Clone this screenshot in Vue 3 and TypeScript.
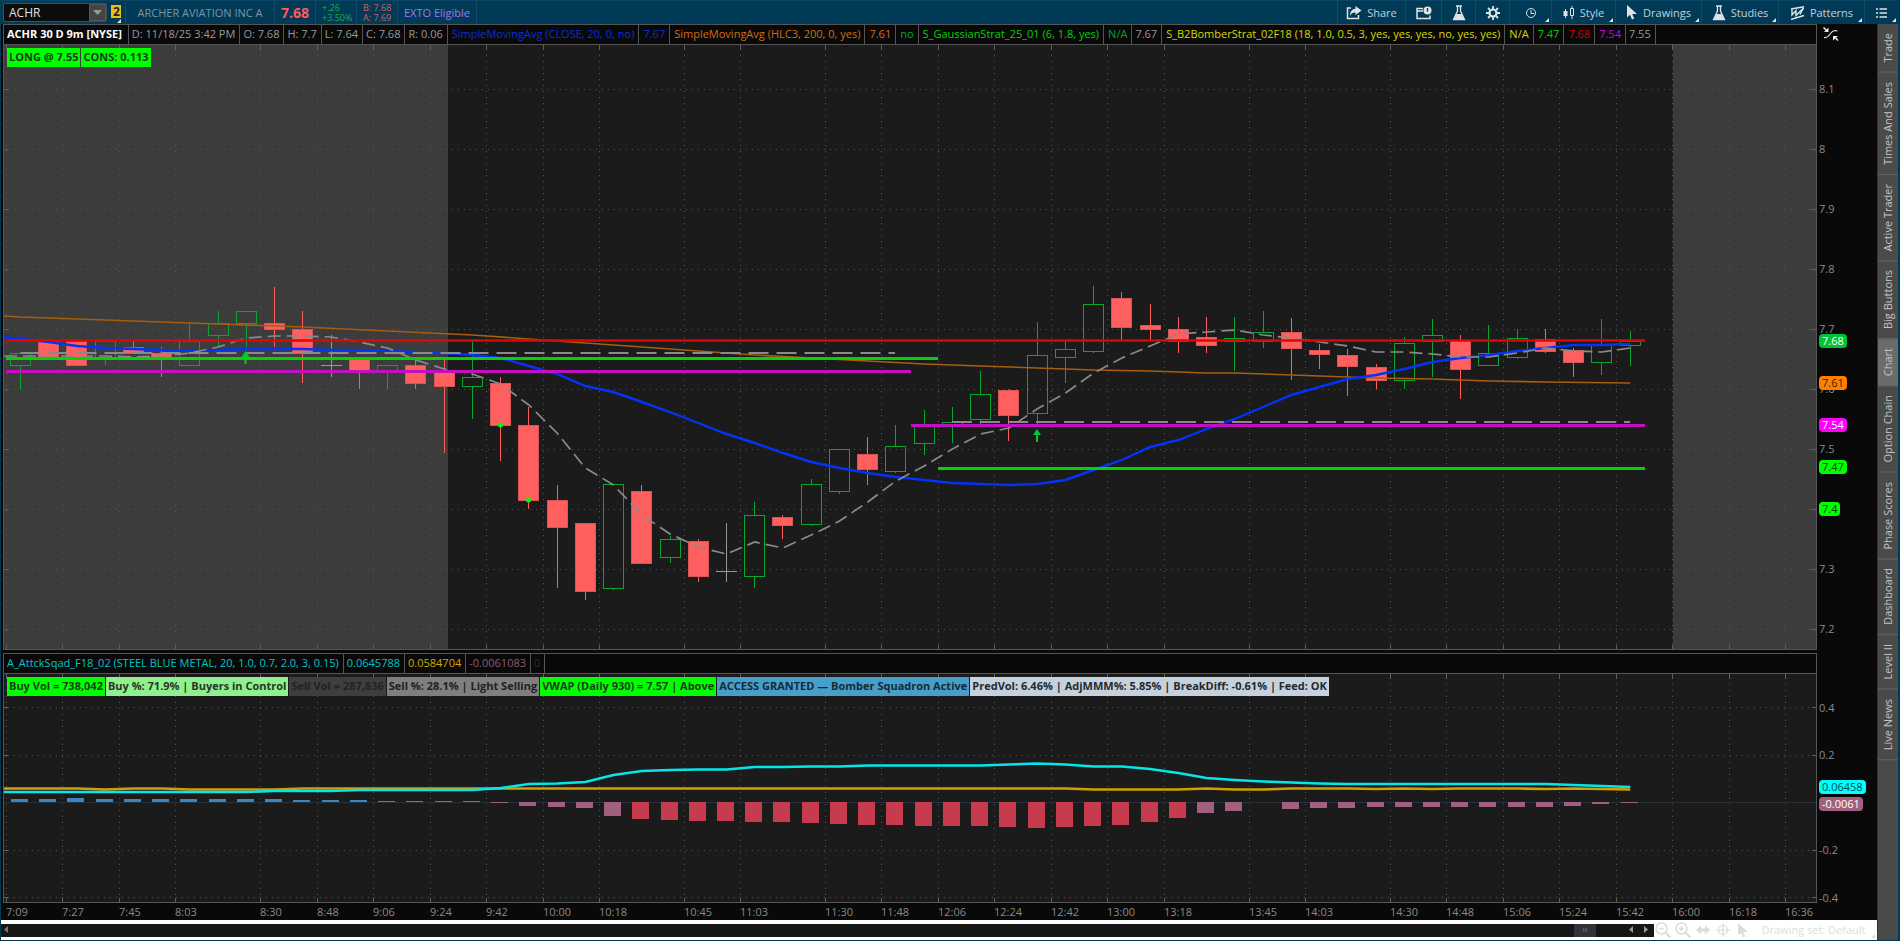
<script setup lang="ts">
type Pt = [number, number]
type Candle = [open: number, close: number, high: number, low: number]

const STEP = 28.24
const view = { x: 3, y: 45, w: 1814, h: 605 }
const lower = { x: 3, y: 674, w: 1814, h: 229 }

const slotX = (i: number) => 6.5 + STEP * i
const midX = (i: number) => 20.5 + STEP * i
const priceY = (p: number) => 329 + (7.7 - p) * 600
const studyY = (v: number) => 802.5 - v * 237.5

const quote = [
  { text: 'D: 11/18/25 3:42 PM', tone: 'grey' },
  { text: 'O: 7.68', tone: 'grey' },
  { text: 'H: 7.7', tone: 'grey' },
  { text: 'L: 7.64', tone: 'grey' },
  { text: 'C: 7.68', tone: 'grey' },
  { text: 'R: 0.06', tone: 'grey' },
  { text: 'SimpleMovingAvg (CLOSE, 20, 0, no)', tone: 'blue' },
  { text: '7.67', tone: 'blue' },
  { text: 'SimpleMovingAvg (HLC3, 200, 0, yes)', tone: 'orange' },
  { text: '7.61', tone: 'orange' },
  { text: 'no', tone: 'green' },
  { text: 'S_GaussianStrat_25_01 (6, 1.8, yes)', tone: 'lime' },
  { text: 'N/A', tone: 'green' },
  { text: '7.67', tone: 'grey' },
  { text: 'S_B2BomberStrat_02F18 (18, 1.0, 0.5, 3, yes, yes, yes, no, yes, yes)', tone: 'yellow' },
  { text: 'N/A', tone: 'yellow' },
  { text: '7.47', tone: 'lime' },
  { text: '7.68', tone: 'red' },
  { text: '7.54', tone: 'magenta' },
  { text: '7.55', tone: 'grey' },
]

const studyHead = [
  { text: 'A_AttckSqad_F18_02 (STEEL BLUE METAL, 20, 1.0, 0.7, 2.0, 3, 0.15)', tone: 'cyan' },
  { text: '0.0645788', tone: 'cyan' },
  { text: '0.0584704', tone: 'gold' },
  { text: '-0.0061083', tone: 'mauve' },
  { text: '0', tone: 'dim' },
]

const studyLabels = [
  { text: 'Buy Vol = 738,042', kind: 'lime' },
  { text: 'Buy %: 71.9% | Buyers in Control', kind: 'pale' },
  { text: 'Sell Vol = 287,836', kind: 'dark' },
  { text: 'Sell %: 28.1% | Light Selling', kind: 'mid' },
  { text: 'VWAP (Daily 930) = 7.57 | Above', kind: 'lime' },
  { text: 'ACCESS GRANTED — Bomber Squadron Active', kind: 'steel' },
  { text: 'PredVol: 6.46% | AdjMMM%: 5.85% | BreakDiff: -0.61% | Feed: OK', kind: 'silver' },
]

const times = [
  '7:09', '7:27', '7:45', '8:03', '8:30', '8:48', '9:06', '9:24', '9:42', '10:00',
  '10:18', '10:45', '11:03', '11:30', '11:48', '12:06', '12:24', '12:42', '13:00', '13:18',
  '13:45', '14:03', '14:30', '14:48', '15:06', '15:24', '15:42', '16:00', '16:18', '16:36',
].map((label) => {
  const [h, m] = label.split(':').map(Number)
  const x = Math.floor(slotX((h * 60 + m - 429) / 9))
  return { label, x: x + 0.5, left: ((x - view.x) / view.w) * 100 + '%' }
})

const priceTop = (p: number) => ((priceY(p) - view.y) / view.h) * 100 + '%'
const studyTop = (v: number) => ((studyY(v) - lower.y) / lower.h) * 100 + '%'
const prices = [8.1, 8, 7.9, 7.8, 7.7, 7.6, 7.5, 7.4, 7.3, 7.2]
const levels = [0.4, 0.2, -0.2, -0.4]
const priceTags = [
  { p: 7.68, text: '7.68', kind: 'current' },
  { p: 7.61, text: '7.61', kind: 'orange' },
  { p: 7.54, text: '7.54', kind: 'magenta' },
  { p: 7.47, text: '7.47', kind: 'lime' },
  { p: 7.4, text: '7.4', kind: 'lime' },
]

const candles: Candle[] = [
  [7.64, 7.66, 7.66, 7.6], [7.68, 7.65, 7.68, 7.65], [7.68, 7.64, 7.68, 7.64], [7.65, 7.68, 7.68, 7.64],
  [7.67, 7.66, 7.68, 7.66], [7.66, 7.65, 7.67, 7.62], [7.64, 7.68, 7.71, 7.64], [7.69, 7.71, 7.73, 7.67],
  [7.71, 7.73, 7.73, 7.67], [7.71, 7.7, 7.77, 7.67], [7.7, 7.66, 7.73, 7.61], [7.64, 7.64, 7.69, 7.62],
  [7.65, 7.63, 7.65, 7.6], [7.63, 7.64, 7.64, 7.6], [7.64, 7.61, 7.65, 7.6], [7.63, 7.605, 7.65, 7.494],
  [7.605, 7.62, 7.68, 7.55], [7.61, 7.54, 7.62, 7.48], [7.54, 7.415, 7.57, 7.4], [7.415, 7.37, 7.44, 7.268],
  [7.376, 7.263, 7.376, 7.248], [7.269, 7.441, 7.441, 7.265], [7.43, 7.31, 7.44, 7.31], [7.32, 7.35, 7.355, 7.31],
  [7.346, 7.288, 7.35, 7.278], [7.296, 7.296, 7.376, 7.278], [7.289, 7.39, 7.411, 7.268], [7.386, 7.374, 7.39, 7.35],
  [7.375, 7.441, 7.45, 7.372], [7.43, 7.5, 7.5, 7.425], [7.491, 7.467, 7.52, 7.44], [7.463, 7.505, 7.54, 7.46],
  [7.51, 7.54, 7.565, 7.49], [7.54, 7.545, 7.57, 7.51], [7.55, 7.592, 7.63, 7.542], [7.598, 7.557, 7.6, 7.514],
  [7.56, 7.656, 7.711, 7.542], [7.654, 7.667, 7.68, 7.61], [7.663, 7.742, 7.772, 7.66], [7.752, 7.704, 7.762, 7.68],
  [7.706, 7.7, 7.742, 7.68], [7.7, 7.68, 7.72, 7.66], [7.686, 7.674, 7.72, 7.66], [7.68, 7.685, 7.72, 7.63],
  [7.68, 7.695, 7.73, 7.669], [7.695, 7.669, 7.719, 7.615], [7.665, 7.659, 7.675, 7.634], [7.656, 7.639, 7.666, 7.589],
  [7.636, 7.615, 7.641, 7.6], [7.615, 7.676, 7.686, 7.6], [7.68, 7.69, 7.716, 7.62], [7.681, 7.634, 7.69, 7.584],
  [7.64, 7.66, 7.706, 7.638], [7.654, 7.685, 7.7, 7.65], [7.683, 7.664, 7.7, 7.66], [7.665, 7.645, 7.668, 7.62],
  [7.645, 7.674, 7.717, 7.624], [7.674, 7.68, 7.697, 7.639],
]

const bars = candles.map(([open, close, high, low], i) => {
  const x = Math.floor(midX(i)) + 0.5
  const top = Math.round(priceY(Math.max(open, close)))
  const bottom = Math.round(priceY(Math.min(open, close)))
  const kind = open === close ? 'flat' : close > open ? 'rise' : 'fall'
  return { x, top, bottom, kind, high: Math.round(priceY(high)), low: Math.round(priceY(low)) }
})

const path = (pts: Pt[]) => 'M' + pts.map(([x, y]) => x.toFixed(1) + ' ' + y).join('L')
const series = (start: number, ys: number[]) => path([[4, start], ...ys.map((y, i): Pt => [midX(i), y])])

const smaFast = series(337, [
  339, 342, 346, 348, 349, 350, 351, 350, 349, 349, 349, 350, 350, 351, 352, 353, 355, 358, 366, 374,
  386, 392, 402, 412, 423, 434, 443, 453, 462, 468, 473, 477, 480, 483, 484, 485, 484, 480, 470, 460,
  447, 440, 429, 419, 407, 395, 387, 379, 375, 369, 362, 358, 355, 351, 348, 345, 345, 344,
])
const gaussian = series(356, [
  356, 356, 356, 356, 357, 356, 353, 347, 338, 336, 336, 337, 342, 348, 360, 369, 374, 384, 405, 433,
  468, 485, 515, 534, 547, 554, 542, 548, 535, 521, 502, 481, 466, 449, 434, 428, 409, 393, 373, 358,
  346, 334, 332, 330, 335, 338, 342, 346, 352, 352, 354, 357, 357, 353, 348, 351, 352, 348,
])
const slowKnots: Pt[] = [
  [0, 317], [4, 321], [7, 324], [10, 327], [13, 331], [16, 335], [18, 339], [20, 343], [22, 347], [24, 351],
  [26, 355], [28, 358], [30, 361], [32, 364], [34, 366], [36, 368], [38, 370], [40, 371], [42, 373],
  [43, 373], [45, 375], [48, 378], [50, 379], [52, 381], [54, 382], [57, 383],
]
const smaSlow = path([[4, 316], ...slowKnots.map(([i, y]): Pt => [midX(i), y])])

const cyanLine = series(792, [
  792, 792, 792, 792, 792, 792, 792, 792, 792, 791, 791, 791, 790, 790, 790, 790, 790, 788, 784, 783.5,
  782, 775, 771, 770, 769.5, 769.5, 767, 767, 766.5, 766.5, 765.5, 765.5, 765.5, 765.5, 765.5, 764.5, 763.5, 764.5, 766.5, 766.5,
  769, 773, 778, 780, 781.5, 782.5, 783.5, 784, 784, 784, 784, 784, 784, 784, 784, 785, 786, 787,
])
const goldLine = series(788.5, [
  788.5, 788.5, 788.5, 789.5, 788.5, 788.5, 789.5, 789.5, 789.5, 789.5, ...Array(28).fill(788.5),
  789.5, 789.5, 789.5, 789.5, 788.5, 789.5, 789.5, 788.5, 788.5, 788.5, 789, 788.5, 789, 788.5, 788.5, 788.5, 789, 788.5, 789, 789.5,
])

const histogram = [
  3, 3, 4, 3, 3, 3, 3, 3, 3, 3, 2, 2, 2, 1, 1, 1, 1, -1, -4, -5, -6, -14, -17, -18, -19, -19, -20, -20, -21, -22,
  -23, -23, -24, -24, -24, -25, -26, -25, -24, -23, -20, -16, -11, -9, 0, -7, -6, -6, -5, -5, -5, -5, -5, -5, -5, -4, -2, -1,
].map((v, i) => ({
  x: Math.floor(midX(i)) - 9,
  y: v > 0 ? 802 - v : 802,
  h: Math.abs(v),
  kind: v > 0 ? 'gain' : v > -15 ? 'soft' : 'hard',
}))

const arrows = [{ x: 245.5, y: 351 }, { x: 1037, y: 429 }]
const tabs = ['Trade', 'Times And Sales', 'Active Trader', 'Big Buttons', 'Chart', 'Option Chain', 'Phase Scores', 'Dashboard', 'Level II', 'Live News']
</script>

<template>
  <div class="app">
    <header class="toolbar">
      <div class="symbol">
        <input id="symbol" value="ACHR" aria-label="Symbol" />
        <button aria-label="Symbol list"><svg width="10" height="6"><path d="M0 0h9L4.500 5z" fill="#999" /></svg></button>
      </div>
      <button class="link-no" aria-label="Link color 2">2<i class="corner"></i></button>
      <span class="name">ARCHER AVIATION INC A</span>
      <strong class="last">7.68</strong>
      <span class="pair up"><span>+.26</span><span>+3.50%</span></span>
      <span class="pair dn"><span>B: 7.68</span><span>A: 7.69</span></span>
      <span class="exto">EXTO Eligible</span>
      <nav class="tools">
        <button>
          <svg width="16" height="14" viewBox="0 0 16 14"><path d="M5 2H1.500v10.500h11V9" fill="none" stroke="#dde3e7" stroke-width="1.500" /><path d="M9.500 0l6 4.500-6 4.500V6.500C6.500 6.500 5 7.500 4 10c0-4 1.500-7 5.500-7.300z" fill="#dde3e7" /></svg>
          Share
        </button>
        <button aria-label="Events">
          <svg width="16" height="14" viewBox="0 0 16 14"><path d="M7 2.500H1v10h13V9.500M1 5h6" fill="none" stroke="#dde3e7" stroke-width="1.500" /><circle cx="11.500" cy="4.500" r="4" fill="#dde3e7" /><path d="M11.500 2v3.500" fill="none" stroke="#003a57" stroke-width="1.300" /></svg>
        </button>
        <button aria-label="Lab">
          <svg width="14" height="16" viewBox="0 0 14 16"><path d="M4 1h6M5.500 1v5L1.500 14.500h11L8.500 6V1" fill="none" stroke="#dde3e7" stroke-width="1.300" /><path d="M4.500 9h5l2.500 5H2z" fill="#dde3e7" /></svg>
        </button>
        <button aria-label="Settings">
          <svg width="16" height="16" viewBox="0 0 16 16"><circle cx="8" cy="8" r="3.500" fill="none" stroke="#dde3e7" stroke-width="2.200" /><path d="M8 1v3M8 12v3M1 8h3M12 8h3M3 3l2 2M11 11l2 2M13 3l-2 2M5 11l-2 2" stroke="#dde3e7" stroke-width="1.800" /></svg>
        </button>
        <button aria-label="Time frame">
          <svg width="12" height="12" viewBox="0 0 12 12"><circle cx="6" cy="6" r="4.500" fill="none" stroke="#dde3e7" /><path d="M6 3v3.500h3" fill="none" stroke="#dde3e7" /></svg>
          <i class="corner"></i>
        </button>
        <button>
          <svg width="12" height="14" viewBox="0 0 12 14"><path d="M2.500 3v9M9 0v13" stroke="#dde3e7" /><path d="M.500 5h4v5h-4z" fill="#dde3e7" /><path d="M7.500 2.500h3v7h-3z" fill="#003a57" stroke="#dde3e7" /></svg>
          Style<i class="corner"></i>
        </button>
        <button>
          <svg width="12" height="15" viewBox="0 0 12 15"><path d="M1 0v12.500l3-2.700 2 4.700 2.200-1-2-4.500H11z" fill="#dde3e7" /></svg>
          Drawings<i class="corner"></i>
        </button>
        <button>
          <svg width="14" height="16" viewBox="0 0 14 16"><path d="M4 1h6M5.500 1v5L1.500 14.500h11L8.500 6V1" fill="none" stroke="#dde3e7" stroke-width="1.300" /><path d="M4.500 9h5l2.500 5H2z" fill="#dde3e7" /></svg>
          Studies<i class="corner"></i>
        </button>
        <button>
          <svg width="15" height="14" viewBox="0 0 15 14"><path d="M1 3L14 .800M1 13.500l13-4M2 3v6l4-4.500v5L13.500 2 10 8.500" fill="none" stroke="#dde3e7" stroke-width="1.400" /></svg>
          Patterns<i class="corner"></i>
        </button>
        <button aria-label="Menu">
          <svg width="11" height="12" viewBox="0 0 11 12"><path d="M0 2h2M0 6h2M0 10h2M3.500 2H11M3.500 6H11M3.500 10H11" stroke="#dde3e7" stroke-width="1.500" /></svg>
          <i class="corner"></i>
        </button>
      </nav>
    </header>

    <div class="body">
      <main class="work">
        <section class="charts">
          <div class="head quote">
            <strong>ACHR 30 D 9m [NYSE]</strong>
            <span v-for="(c, i) in quote" :key="i" :class="c.tone">{{ c.text }}</span>
          </div>
          <div class="axis-top">
            <svg width="16" height="16" viewBox="0 0 16 16"><path d="M1 11.500C5 12.500 5.500 10 7.500 7.500S10.500 4 14.500 5" fill="none" stroke="#ddd" stroke-width="1.200" /><path d="M5.500 1.500V6H1zM10 10h5l-5 4.500z" fill="#eee" /><path d="M.500 1.500l3 3M12.500 12l2.500 2.500" stroke="#eee" stroke-width="1.500" /></svg>
          </div>

          <div class="plot">
            <svg class="canvas" :viewBox="`${view.x} ${view.y} ${view.w} ${view.h}`" preserveAspectRatio="none">
              <rect x="3" y="45" width="445" height="605" fill="#3c3c3c" />
              <rect x="1673" y="45" width="144" height="605" fill="#3c3c3c" />
              <g class="grid">
                <path v-for="p in prices" :key="p" :d="`M8 ${priceY(p) + 0.5}H1812`" />
                <path v-for="t in times" :key="t.label" :d="`M${t.x} 55V645`" />
              </g>
              <g class="ticks">
                <path v-for="p in prices" :key="p" :d="`M4 ${priceY(p) + 0.5}h5M1811 ${priceY(p) + 0.5}h6`" />
                <path v-for="t in times" :key="t.label" :d="`M${t.x} 45v5M${t.x} 645v5`" />
              </g>
              <g v-for="(b, i) in bars" :key="i" :class="b.kind">
                <path :d="`M${b.x} ${b.high}V${b.kind === 'flat' ? b.low : b.top}M${b.x} ${b.bottom}V${b.low}`" />
                <path v-if="b.kind === 'flat'" :d="`M${b.x - 10.5} ${b.top + 0.5}h21`" />
                <rect v-else :x="b.x - 10" :y="b.top + 0.5" width="20" :height="Math.max(b.bottom - b.top, 2)" />
              </g>
              <path :d="smaSlow" class="line slow" />
              <path :d="smaFast" class="line fast" />
              <path :d="gaussian" class="line gauss" />
              <path d="M20.500 353H895M952 422H1630" class="line mid" />
              <path d="M6 358.500H938M938 468.500H1645" class="line g" />
              <path d="M6 371.500H911M911 425.500H1645" class="line m" />
              <path d="M6 340.500H1645" class="line r" />
              <circle cx="500.500" cy="425" r="2.500" fill="#0f0" />
              <circle cx="528.500" cy="500" r="2.500" fill="#0f0" />
              <path v-for="a in arrows" :key="a.x" :d="`M${a.x} ${a.y}l4 6h-3v7h-2v-7h-3z`" fill="#00c82d" />
            </svg>
            <div class="labels"><b class="lime">LONG @ 7.55</b><b class="lime">CONS: 0.113</b></div>
          </div>
          <div class="axis">
            <template v-for="p in prices" :key="p"><span v-if="p !== 7.4" :style="{ top: priceTop(p) }">{{ p }}</span></template>
            <em v-for="t in priceTags" :key="t.text" :class="t.kind" :style="{ top: priceTop(t.p) }">{{ t.text }}</em>
          </div>

          <div class="split"></div>

          <div class="head">
            <span v-for="(c, i) in studyHead" :key="i" :class="c.tone">{{ c.text }}</span>
          </div>
          <div class="axis-top"></div>

          <div class="plot">
            <svg class="canvas" :viewBox="`${lower.x} ${lower.y} ${lower.w} ${lower.h}`" preserveAspectRatio="none">
              <g class="grid">
                <path v-for="v in levels" :key="v" :d="`M8 ${Math.floor(studyY(v)) + 0.5}H1812`" />
                <path v-for="t in times" :key="t.label" :d="`M${t.x} 684V897`" />
              </g>
              <g class="ticks">
                <path v-for="v in levels" :key="v" :d="`M4 ${Math.floor(studyY(v)) + 0.5}h4M1812 ${Math.floor(studyY(v)) + 0.5}h5`" />
                <path v-for="t in times" :key="t.label" :d="`M${t.x} 674v5M${t.x} 898v5`" />
              </g>
              <path d="M4 802.500H1816" stroke="#25323c" />
              <rect v-for="(h, i) in histogram" :key="i" :class="h.kind" :x="h.x" :y="h.y" width="17" :height="h.h" />
              <path :d="goldLine" class="line gold-line" />
              <path :d="cyanLine" class="line cyan-line" />
            </svg>
            <div class="labels"><b v-for="l in studyLabels" :key="l.text" :class="l.kind">{{ l.text }}</b></div>
          </div>
          <div class="axis">
            <span v-for="v in levels" :key="v" :style="{ top: studyTop(v) }">{{ v }}</span>
            <em class="cyan-tag" :style="{ top: studyTop(0.066) }">0.06458</em>
            <em class="mauve-tag" :style="{ top: studyTop(-0.0061) }">-0.0061</em>
          </div>

          <div class="times"><span v-for="t in times" :key="t.label" :style="{ left: t.left }">{{ t.label }}</span></div>
        </section>

        <footer class="foot">
          <div class="scroll">
            <button aria-label="Scroll to start"><svg width="5" height="8"><path d="M4 0v7L0 3.500z" fill="#777" /></svg></button>
            <div class="track"><i class="thumb">III</i></div>
            <button aria-label="Scroll left"><svg width="5" height="8"><path d="M4 0v7L0 3.500z" fill="#999" /></svg></button>
            <button aria-label="Scroll right"><svg width="5" height="8"><path d="M1 0v7l4-3.500z" fill="#999" /></svg></button>
          </div>
          <div class="zoom">
            <button aria-label="Zoom out"><svg width="16" height="16" viewBox="0 0 16 16"><g fill="none" stroke="#dcdcdc" stroke-width="1.500"><circle cx="6.500" cy="6.500" r="5.500" /><path d="M4 6.500h5" /><path d="M10.500 10.500l5 5" stroke-width="2" /></g></svg></button>
            <button aria-label="Zoom in"><svg width="16" height="16" viewBox="0 0 16 16"><g fill="none" stroke="#dcdcdc" stroke-width="1.500"><circle cx="6.500" cy="6.500" r="5.500" /><path d="M4 6.500h5M6.500 4v5" /><path d="M10.500 10.500l5 5" stroke-width="2" /></g></svg></button>
            <button aria-label="Pan"><svg width="14" height="10" viewBox="0 0 14 10"><path d="M0 5l5-4.500V3.500h4V.500L14 5 9 9.500v-3H5v3z" fill="#dcdcdc" /></svg></button>
            <button aria-label="Crosshair"><svg width="14" height="14" viewBox="0 0 14 14"><g fill="none" stroke="#dcdcdc" stroke-width="1.200"><circle cx="7" cy="7" r="4.500" /><path d="M7 0v14M0 7h14" /></g></svg></button>
            <button aria-label="Pointer"><svg width="12" height="15" viewBox="0 0 12 15"><path d="M1 0v12.500l3-2.700 2 4.700 2.200-1-2-4.500H11z" fill="#dcdcdc" /></svg></button>
          </div>
          <button class="set">Drawing set: Default<i class="corner"></i></button>
        </footer>
      </main>

      <aside class="side">
        <button v-for="t in tabs" :key="t" :class="{ on: t === 'Chart' }">{{ t }}</button>
      </aside>
    </div>
  </div>
</template>

<style>
html, body { margin: 0; background: #003a57; }
</style>

<style scoped>
.app { display: flex; flex-direction: column; height: 100vh; box-sizing: border-box; padding: 0 2px 1px 1px; background: #003a57; color: #999; font: 11px/16px "Open Sans", "Noto Sans", sans-serif; overflow: hidden; }
.app * { box-sizing: border-box; }
button { display: flex; align-items: center; justify-content: center; margin: 0; padding: 0; border: 0; background: none; color: inherit; font: inherit; }
svg { display: block; flex: none; }
.corner { position: absolute; right: 2px; bottom: 2px; width: 0; height: 0; border-left: 4px solid transparent; border-bottom: 4px solid #dde3e7; }

.toolbar { display: flex; flex: none; height: 24px; align-items: stretch; white-space: nowrap; border-top: 1px solid #0a4665; }
.symbol { display: flex; width: 104px; margin: 2px 3px 2px 2px; border: 1px solid #4a4a4a; background: #0c0c0c; border-radius: 2px; }
.symbol input { flex: 1; min-width: 0; border: 0; padding: 0 5px; background: none; color: #e0e0e0; font: inherit; font-size: 12px; outline: 0; }
.symbol button { width: 17px; background: #444; border: 1px solid #555; }
.link-no { position: relative; width: 15px; padding: 0 0 1px 3px; justify-content: flex-start; color: #222; font-size: 12px; font-weight: 700; background: linear-gradient(#e9bd16, #e9bd16) no-repeat 1px 4px / 10px 13px; }
.link-no .corner { right: 4px; bottom: 1px; }
.name, .last, .pair, .exto { display: flex; align-items: center; justify-content: center; border-left: 1px solid #15496a; flex: none; }
.name { width: 149px; color: #7d96a4; }
.last { width: 41px; color: #ff5c5c; font-size: 14px; }
.pair { width: 41px; flex-direction: column; align-items: flex-start; padding-left: 6px; font-size: 9px; line-height: 10px; }
.pair.up { color: #1dae4b; }
.pair.dn { color: #c3656c; }
.exto { width: 80px; color: #a374ec; border-right: 1px solid #15496a; }
.tools { display: grid; grid-template-columns: 68px 36px 34px 34px 42px 64px 86px 77px 86px 34px; margin-left: auto; color: #c5d0d7; }
.tools button { position: relative; gap: 5px; border-left: 1px solid #15496a; }

.body { display: flex; flex: 1; min-height: 0; }
.work { display: flex; flex: 1; flex-direction: column; min-width: 0; background: #090909; }
.charts { display: grid; flex: 1; min-height: 0; padding-left: 2px; grid-template-columns: minmax(0, 1fr) 60px; grid-template-rows: 21px minmax(0, 605fr) 3px 21px minmax(0, 229fr) 17px; }
.head { display: flex; border: 1px solid #555; background: #090909; white-space: nowrap; overflow: hidden; line-height: 18px; }
.head > * { padding: 0 4px 0 3px; border-right: 1px solid #555; flex: none; }
.head strong { color: #fff; padding-right: 6px; }
.quote span:not(.grey) { padding-left: 4px; }
.grey { color: #999; } .blue { color: #0a2fd8; } .orange { color: #d46c08; } .green { color: #00a82a; } .lime { color: #00d400; }
.yellow { color: #d8d800; } .red { color: #d80000; } .magenta { color: #d800d8; } .cyan { color: #00c4c8; } .gold { color: #d6a800; } .mauve { color: #8e5a74; } .dim { color: #272c31; }
.axis-top { padding: 2px 0 0 6px; }
.plot { position: relative; min-height: 0; background: #1b1b1b; border: solid #555; border-width: 0 1px 1px; }
.canvas { position: absolute; left: -1px; top: 0; width: calc(100% + 2px); height: calc(100% + 1px); }
.plot::after { content: ""; position: absolute; inset: 0 -1px -1px; border: solid #555; border-width: 0 1px 1px; pointer-events: none; }
.grid path { stroke: #545454; stroke-dasharray: 1 5; fill: none; shape-rendering: crispEdges; }
.ticks path { stroke: #606060; shape-rendering: crispEdges; }
.rise path, .rise rect { fill: none; stroke: #0aa52f; }
.fall path { stroke: #ff5c5c; fill: none; }
.fall rect { fill: #ff5f5f; stroke: #d95454; }
.flat path { stroke: #999; fill: none; }
.line { fill: none; stroke-width: 2; }
.slow { stroke: #a85c10; stroke-width: 1.6; }
.fast { stroke: #0433f5; stroke-width: 2.4; }
.gauss { stroke: #8a8a8a; stroke-dasharray: 13 6; stroke-width: 1.7; }
.mid { stroke: #8a8a8a; stroke-dasharray: 20 8; }
.g { stroke: #06d006; stroke-width: 3; } .m { stroke: #c20fc2; stroke-width: 3; } .r { stroke: #e00606; stroke-width: 2.6; }
.gain { fill: #3b87bd; } .soft { fill: #a26080; } .hard { fill: #c63b4e; }
.gold-line { stroke: #d0a002; stroke-width: 2.6; } .cyan-line { stroke: #04e6ea; stroke-width: 2.4; }
.labels { position: relative; display: flex; gap: 1px; padding: 3px 0 0 3px; white-space: nowrap; }
.labels b { padding: 0 2px; height: 19px; line-height: 18px; color: #1d3a1d; flex: none; }
.labels .lime { background: #0f0; } .labels .pale { background: #8ff08f; color: #263526; } .labels .dark { background: #3e3e3e; color: #222; }
.labels .mid { background: #7f7f7f; color: #202020; } .labels .steel { background: #459fc9; color: #172a34; } .labels .silver { background: #c6d1de; color: #24282c; }
.axis { position: relative; }
.axis span, .axis em { position: absolute; left: 2px; transform: translateY(-50%); font-style: normal; white-space: nowrap; color: #8a8a8a; }
.axis em { border-radius: 4px; padding: 0 3px; line-height: 14px; height: 14px; }
.axis .current { background: #00c234; color: #fff; }
.axis .orange { background: #ff8000; color: #402000; }
.axis .magenta { background: #f0f; color: #fff; }
.axis .lime { background: #0f0; color: #044004; }
.axis .cyan-tag { background: #0ff; color: #064a4a; }
.axis .mauve-tag { background: #a26080; color: #fff; }
.split { grid-column: 1 / -1; }
.times { position: relative; grid-column: 1; }
.times span { position: absolute; top: 1px; color: #8a8a8a; }

.foot { display: flex; height: 20px; flex: none; align-items: center; background: #fff; color: #dedede; }
.scroll { display: flex; align-items: center; flex: 1; height: 13px; background: #161616; padding: 0 6px 0 3px; gap: 9px; }
.track { position: relative; display: flex; flex: 1; height: 13px; justify-content: flex-end; padding-right: 24px; }
.thumb { display: block; width: 22px; background: #333; color: #888; font: 6px/12px "Open Sans", sans-serif; text-align: center; }
.zoom { display: flex; gap: 5px; padding-left: 1px; }
.zoom button { width: 15px; height: 18px; }
.set { position: relative; width: 127px; height: 20px; }
.set .corner { border-bottom-color: #dcdcdc; }

.side { display: flex; flex-direction: column; width: 21px; flex: none; background: #4a4a4a; color: #c4c4c4; border-left: 1px solid #333; }
.side button { writing-mode: vertical-rl; transform: rotate(180deg); width: 20px; padding: 9px 0; border-top: 1px solid #646464; flex: none; }
.side .on { background: #6b6b6b; }
</style>
